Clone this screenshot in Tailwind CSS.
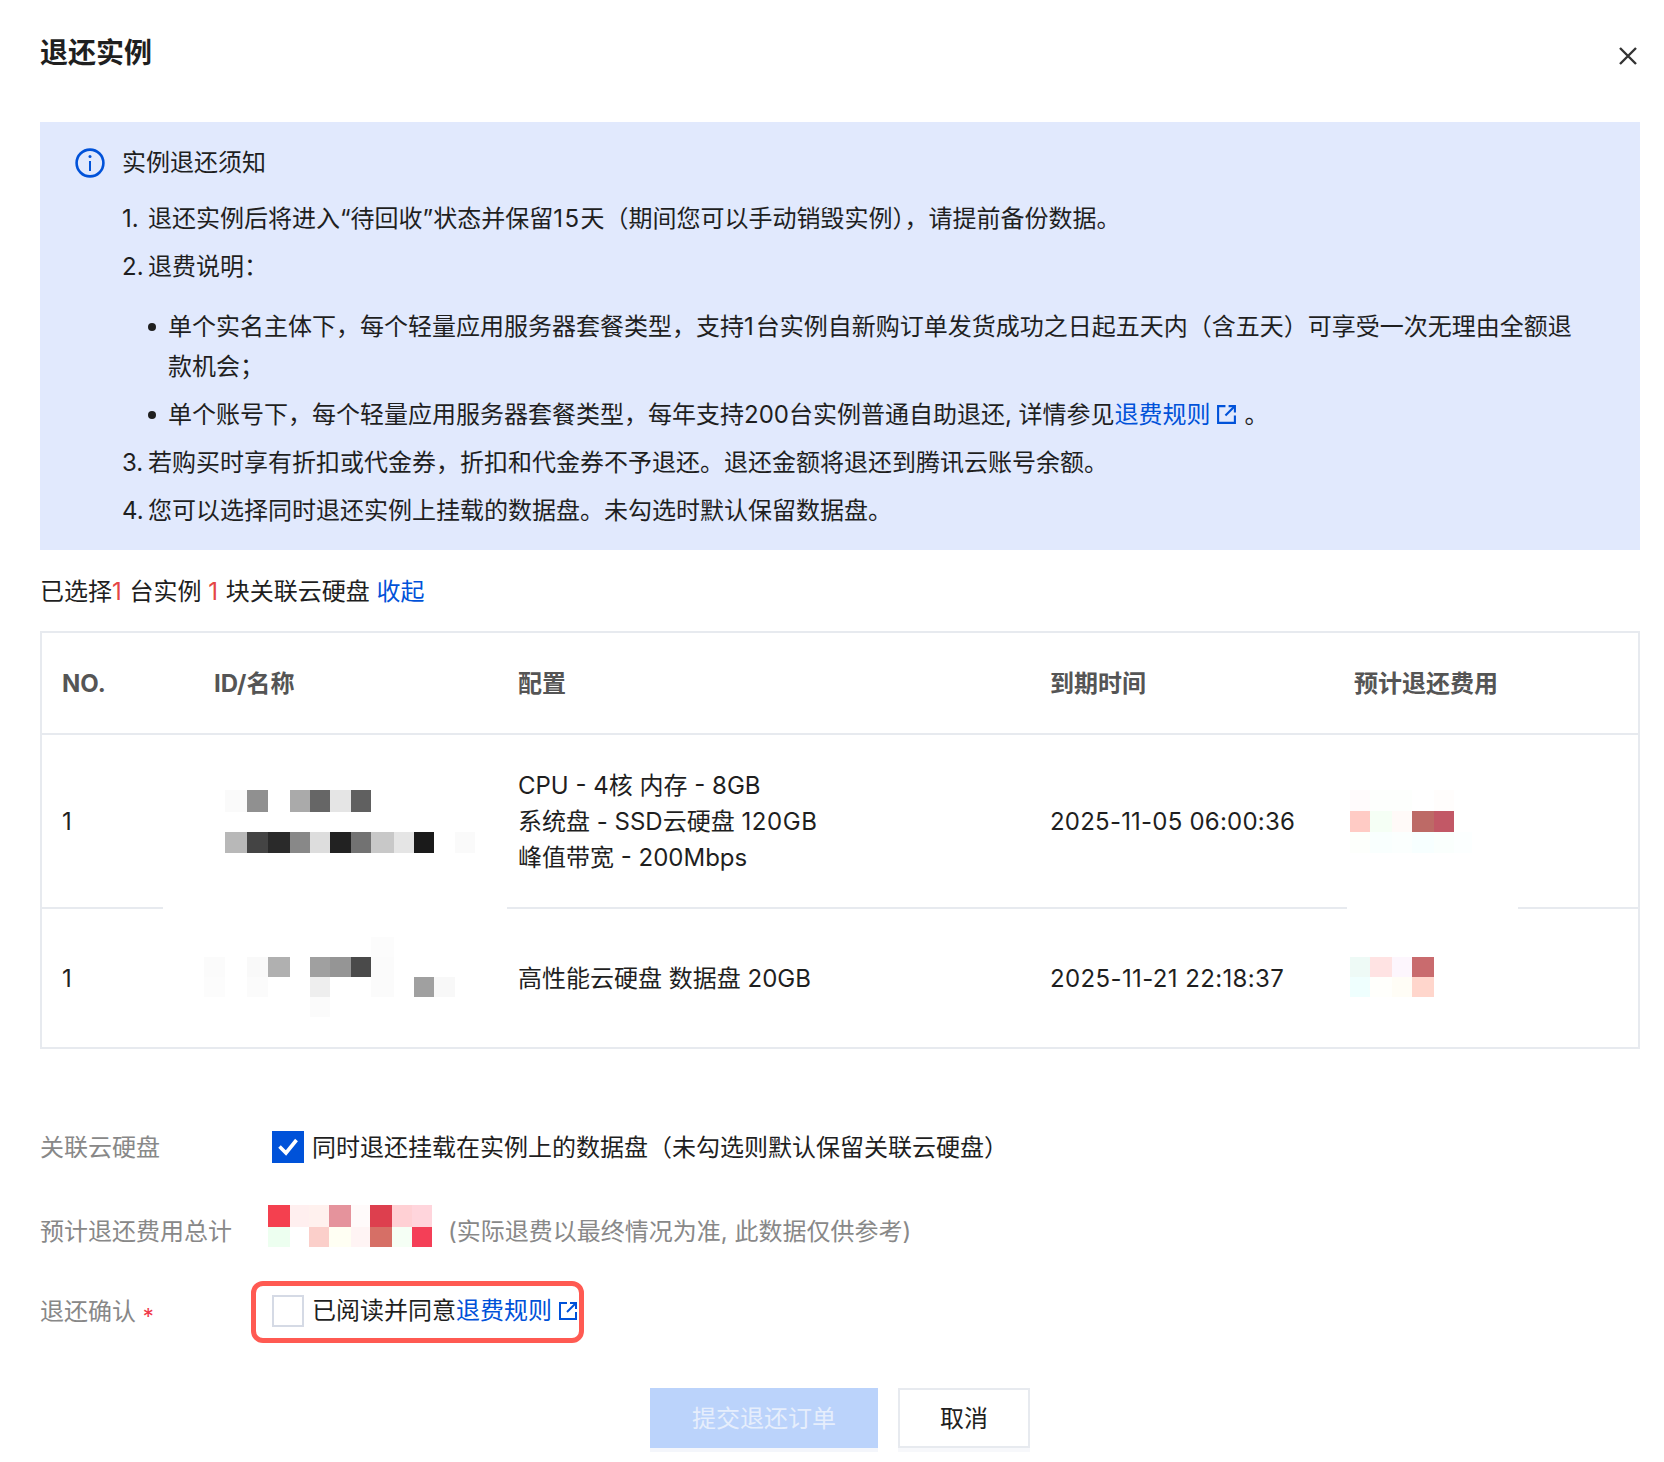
<!DOCTYPE html>
<html lang="zh-CN">
<head>
    <meta charset="UTF-8">
    <title>退还实例</title>
    <script src="https://cdn.jsdelivr.net/npm/@tailwindcss/browser@4"></script>
</head>
<body class="bg-white text-[24px] text-[#1f1f1f] font-['Inter','Noto_Sans_CJK_SC',sans-serif]">
<div class="pl-[40px] pr-[24px] pt-[33px] h-[1462px] overflow-hidden">

    <!-- 标题 -->
    <div class="flex justify-between items-start h-[89px]">
        <h1 class="text-[28px] leading-[40px] font-bold">退还实例</h1>
        <button class="mt-[14px] mr-[3px] text-[#333]">
            <svg class="w-[18px] h-[18px]" viewBox="0 0 18 18" fill="none" stroke="currentColor" stroke-width="2.4"><path d="M1 1l16 16M17 1L1 17"/></svg>
        </button>
    </div>

    <!-- 须知 -->
    <div class="bg-[#e1e9fd] h-[428px] pl-[35px] pr-[50px] pt-[21px] flex gap-[17px]">
        <svg class="w-[30px] h-[30px] mt-[5px] shrink-0 text-[#0052d9]" viewBox="0 0 30 30" fill="none" stroke="currentColor" stroke-width="2.6">
            <circle cx="15" cy="15" r="13.4"/>
            <path d="M15 13v10" stroke-width="2"/>
            <circle cx="15" cy="8.6" r="1.5" fill="currentColor" stroke="none"/>
        </svg>
        <div class="leading-[40px]">
            <p>实例退还须知</p>
            <ol class="mt-[16px] space-y-[7px]">
                <li class="flex mb-[8px]"><span class="w-[26px] shrink-0">1.</span><span>退还实例后将进入“待回收”状态并保留<span class="tracking-[1.5px]">15</span>天（期间您可以手动销毁实例），请提前备份数据。</span></li>
                <li class="flex"><span class="w-[26px] shrink-0">2.</span><span>退费说明：</span></li>
                <li class="mb-[8px]">
                    <ul class="pl-[26px] pt-[13px] space-y-[8px]">
                        <li class="flex"><span class="w-[8px] h-[8px] mt-[16px] mr-[12px] shrink-0 rounded-full bg-[#1f1f1f]"></span><span>单个实名主体下，每个轻量应用服务器套餐类型，支持<span class="tracking-[2px]">1</span>台实例自新购订单发货成功之日起五天内（含五天）可享受一次无理由全额退款机会；</span></li>
                        <li class="flex"><span class="w-[8px] h-[8px] mt-[16px] mr-[12px] shrink-0 rounded-full bg-[#1f1f1f]"></span><span>单个账号下，每个轻量应用服务器套餐类型，每年支持200台实例普通自助退还, 详情参见<a class="text-[#0052d9]">退费规则<svg class="inline-block w-[21px] h-[21px] ml-[5px] mr-[8px] align-[-2px]" viewBox="0 0 20 20" fill="none" stroke="currentColor" stroke-width="2"><path d="M9 2H2v16h16v-7"/><path d="M12 2h6v6"/><path d="M18 2l-9 9"/></svg></a>。</span></li>
                    </ul>
                </li>
                <li class="flex mb-[8px]"><span class="w-[26px] shrink-0">3.</span><span>若购买时享有折扣或代金券，折扣和代金券不予退还。退还金额将退还到腾讯云账号余额。</span></li>
                <li class="flex"><span class="w-[26px] shrink-0">4.</span><span>您可以选择同时退还实例上挂载的数据盘。未勾选时默认保留数据盘。</span></li>
            </ol>
        </div>
    </div>

    <!-- 已选择 -->
    <p class="mt-[23px] leading-[38px]">已选择<span class="text-[#e54545] tracking-[1px]">1</span> 台实例 <span class="text-[#e54545] tracking-[1px]">1</span> 块关联云硬盘 <a class="text-[#0052d9]">收起</a></p>

    <!-- 表格 -->
    <div class="relative mt-[20px] border-2 border-[#e7eaef] w-[1600px] h-[418px]">
        <table class="w-full table-fixed border-separate border-spacing-0">
            <colgroup>
                <col class="w-[152px]"><col class="w-[304px]"><col class="w-[532px]"><col class="w-[304px]"><col>
            </colgroup>
            <thead>
                <tr class="text-[#555] text-left">
                    <th class="h-[102px] px-[20px] pt-[2px] border-b-2 border-[#e7eaef] font-bold">NO.</th>
                    <th class="px-[20px] pt-[2px] border-b-2 border-[#e7eaef] font-bold">ID/名称</th>
                    <th class="px-[20px] pt-[2px] border-b-2 border-[#e7eaef] font-bold">配置</th>
                    <th class="px-[20px] pt-[2px] border-b-2 border-[#e7eaef] font-bold">到期时间</th>
                    <th class="px-[20px] pt-[2px] border-b-2 border-[#e7eaef] font-bold">预计退还费用</th>
                </tr>
            </thead>
            <tbody>
                <tr>
                    <td class="h-[174px] px-[20px] pt-[2px] border-b-2 border-[#e7eaef]">1</td>
                    <td class="px-[20px] pt-[2px] border-b-2 border-[#e7eaef]"></td>
                    <td class="px-[20px] pt-[2px] border-b-2 border-[#e7eaef] leading-[36px]">CPU - 4核 内存 - 8GB<br>系统盘 - SSD云硬盘 <span class="tracking-[0.6px]">120GB</span><br>峰值带宽 - 200Mbps</td>
                    <td class="px-[20px] pt-[2px] border-b-2 border-[#e7eaef] tracking-[0.22px]">2025-11-05 06:00:36</td>
                    <td class="px-[20px] pt-[2px] border-b-2 border-[#e7eaef]"></td>
                </tr>
                <tr>
                    <td class="h-[138px] px-[20px] pt-[2px]">1</td>
                    <td class="px-[20px] pt-[2px]"></td>
                    <td class="px-[20px] pt-[2px]">高性能云硬盘 数据盘 20GB</td>
                    <td class="px-[20px] pt-[2px] tracking-[0.38px]">2025-11-21 22:18:37</td>
                    <td class="px-[20px] pt-[2px]"></td>
                </tr>
            </tbody>
        </table>

        <!-- 打码区域，盖在表格上 -->
        <svg class="absolute left-[-2px] top-[-2px] pointer-events-none" width="1600" height="418" viewBox="40 631 1600 418" shape-rendering="crispEdges">
            <rect x="163" y="904" width="344" height="8" fill="#fff"/>
            <rect x="1347" y="904" width="171" height="8" fill="#fff"/>
            <g>
                <rect x="225" y="790" width="22" height="22" fill="#fafafa"/>
                <rect x="247" y="790" width="21" height="22" fill="#909090"/>
                <rect x="290" y="790" width="20" height="22" fill="#aaaaaa"/>
                <rect x="310" y="790" width="20" height="22" fill="#666666"/>
                <rect x="330" y="790" width="21" height="22" fill="#e5e5e5"/>
                <rect x="351" y="790" width="20" height="22" fill="#606060"/>
                <rect x="225" y="832" width="22" height="21" fill="#b8b8b8"/>
                <rect x="247" y="832" width="21" height="21" fill="#444444"/>
                <rect x="268" y="832" width="22" height="21" fill="#2a2a2a"/>
                <rect x="290" y="832" width="20" height="21" fill="#888888"/>
                <rect x="310" y="832" width="20" height="21" fill="#dddddd"/>
                <rect x="330" y="832" width="21" height="21" fill="#222222"/>
                <rect x="351" y="832" width="20" height="21" fill="#727272"/>
                <rect x="371" y="832" width="23" height="21" fill="#c8c8c8"/>
                <rect x="394" y="832" width="20" height="21" fill="#e5e5e5"/>
                <rect x="414" y="832" width="20" height="21" fill="#1a1a1a"/>
                <rect x="455" y="832" width="20" height="21" fill="#fafafa"/>
            </g>
            <g>
                <rect x="371" y="937" width="23" height="20" fill="#fcfcfc"/>
                <rect x="204" y="957" width="21" height="20" fill="#fbfbfb"/>
                <rect x="247" y="957" width="21" height="20" fill="#f9f9f9"/>
                <rect x="268" y="957" width="22" height="20" fill="#b0b0b0"/>
                <rect x="310" y="957" width="20" height="20" fill="#a0a0a0"/>
                <rect x="330" y="957" width="21" height="20" fill="#959595"/>
                <rect x="351" y="957" width="20" height="20" fill="#4a4a4a"/>
                <rect x="371" y="957" width="23" height="20" fill="#fbfbfb"/>
                <rect x="204" y="977" width="21" height="20" fill="#fcfcfc"/>
                <rect x="247" y="977" width="21" height="20" fill="#fbfbfb"/>
                <rect x="310" y="977" width="20" height="20" fill="#eeeeee"/>
                <rect x="371" y="977" width="23" height="20" fill="#fbfbfb"/>
                <rect x="414" y="977" width="20" height="20" fill="#a0a0a0"/>
                <rect x="434" y="977" width="21" height="20" fill="#f8f8f8"/>
                <rect x="310" y="997" width="20" height="20" fill="#fbfbfb"/>
            </g>
            <g>
                <rect x="1350" y="790" width="20" height="21" fill="#fffbfc"/>
                <rect x="1370" y="790" width="22" height="21" fill="#fdfffd"/>
                <rect x="1392" y="790" width="20" height="21" fill="#fdfffd"/>
                <rect x="1434" y="790" width="20" height="21" fill="#fffdfc"/>
                <rect x="1350" y="811" width="20" height="21" fill="#ffcbc5"/>
                <rect x="1370" y="811" width="22" height="21" fill="#f5fff5"/>
                <rect x="1392" y="811" width="20" height="21" fill="#fffaf8"/>
                <rect x="1412" y="811" width="22" height="21" fill="#bd6a66"/>
                <rect x="1434" y="811" width="20" height="21" fill="#c25866"/>
                <rect x="1350" y="832" width="20" height="21" fill="#fdfffc"/>
                <rect x="1370" y="832" width="22" height="21" fill="#f9fffe"/>
                <rect x="1392" y="832" width="20" height="21" fill="#fbfffe"/>
                <rect x="1412" y="832" width="22" height="21" fill="#f7ffff"/>
                <rect x="1434" y="832" width="20" height="21" fill="#fafffd"/>
                <rect x="1454" y="832" width="18" height="21" fill="#fcffff"/>
            </g>
            <g>
                <rect x="1350" y="957" width="20" height="20" fill="#eefaf6"/>
                <rect x="1370" y="957" width="22" height="20" fill="#ffe3e3"/>
                <rect x="1392" y="957" width="20" height="20" fill="#fdf6fd"/>
                <rect x="1412" y="957" width="22" height="20" fill="#c96b6e"/>
                <rect x="1350" y="977" width="20" height="20" fill="#effffe"/>
                <rect x="1370" y="977" width="22" height="20" fill="#fffffc"/>
                <rect x="1392" y="977" width="20" height="20" fill="#fffdf6"/>
                <rect x="1412" y="977" width="22" height="20" fill="#ffd6cc"/>
            </g>
        </svg>
    </div>

    <!-- 表单 -->
    <div class="mt-[82px] flex items-center h-[32px]">
        <label class="w-[232px] pt-[2px] text-[#888]">关联云硬盘</label>
        <span class="w-[32px] h-[32px] bg-[#0052d9] flex items-center justify-center">
            <svg class="w-[20px] h-[20px]" viewBox="0 0 20 20" fill="none" stroke="#fff" stroke-width="3.6"><path d="M1.5 9.5l6.5 6.5L18.5 3"/></svg>
        </span>
        <span class="ml-[8px] pt-[2px]">同时退还挂载在实例上的数据盘（未勾选则默认保留关联云硬盘）</span>
    </div>

    <div class="mt-[42px] flex items-center h-[42px]">
        <label class="w-[228px] pt-[12px] text-[#888]">预计退还费用总计</label>
        <svg class="shrink-0" width="164" height="42" viewBox="268 1205 164 42" shape-rendering="crispEdges">
            <rect x="268" y="1205" width="22" height="22" fill="#f4404f"/>
            <rect x="290" y="1205" width="19" height="22" fill="#ffefef"/>
            <rect x="309" y="1205" width="20" height="22" fill="#fff1ee"/>
            <rect x="329" y="1205" width="22" height="22" fill="#e5939c"/>
            <rect x="351" y="1205" width="19" height="22" fill="#fffafa"/>
            <rect x="370" y="1205" width="22" height="22" fill="#dd3f4e"/>
            <rect x="392" y="1205" width="20" height="22" fill="#ffd0d4"/>
            <rect x="412" y="1205" width="20" height="22" fill="#ffd5dc"/>
            <rect x="268" y="1227" width="22" height="20" fill="#edfff0"/>
            <rect x="309" y="1227" width="20" height="20" fill="#fbcfca"/>
            <rect x="329" y="1227" width="22" height="20" fill="#fffff3"/>
            <rect x="351" y="1227" width="19" height="20" fill="#fff4f4"/>
            <rect x="370" y="1227" width="22" height="20" fill="#d66f66"/>
            <rect x="392" y="1227" width="20" height="20" fill="#f5fff5"/>
            <rect x="412" y="1227" width="20" height="20" fill="#f43f57"/>
        </svg>
        <span class="ml-[16px] pt-[12px] text-[#888]">(实际退费以最终情况为准, 此数据仅供参考)</span>
    </div>

    <div class="mt-[34px] flex items-center h-[62px]">
        <label class="w-[211px] text-[#888]">退还确认 <span class="inline-block translate-y-[4px] text-[22px] text-[#f0384a]">*</span></label>
        <div class="w-[333px] h-[62px] border-[5px] border-[#ff5a52] rounded-[12px] pl-[16px] pb-[2px] flex items-center whitespace-nowrap">
            <span class="w-[32px] h-[32px] shrink-0 border-2 border-[#d5dae5] bg-white"></span>
            <span class="ml-[8px]">已阅读并同意</span><a class="text-[#0052d9] flex items-center">退费规则<svg class="w-[20px] h-[20px] ml-[6px] shrink-0" viewBox="0 0 20 20" fill="none" stroke="currentColor" stroke-width="2"><path d="M9 2H2v16h16v-7"/><path d="M12 2h6v6"/><path d="M18 2l-9 9"/></svg></a>
        </div>
    </div>

    <!-- 按钮 -->
    <div class="mt-[45px] flex justify-center gap-[20px]">
        <button class="w-[228px] h-[60px] pt-[2px] bg-[#bbd3fb] text-[#e6eefc] shadow-[0_4px_0_#f4f6fb]">提交退还订单</button>
        <button class="w-[132px] h-[60px] pt-[2px] border-2 border-[#e7eaef] bg-white shadow-[0_4px_0_#f7f8fb]">取消</button>
    </div>
</div>
</body>
</html>
